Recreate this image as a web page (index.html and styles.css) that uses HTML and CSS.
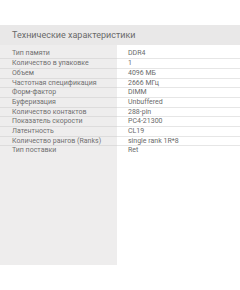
FILE: index.html
```html
<!DOCTYPE html>
<html lang="ru">
<head>
<meta charset="utf-8">
<link rel="stylesheet" href="styles.css">
</head>
<body>
<div class="page">
  <div class="title">Технические характеристики</div>
  <div class="specs">
    <div class="label">Тип памяти</div><div class="value">DDR4</div>
    <div class="label">Количество в упаковке</div><div class="value">1</div>
    <div class="label">Объем</div><div class="value">4096 МБ</div>
    <div class="label">Частотная спецификация</div><div class="value">2666 МГц</div>
    <div class="label">Форм-фактор</div><div class="value">DIMM</div>
    <div class="label">Буферизация</div><div class="value">Unbuffered</div>
    <div class="label">Количество контактов</div><div class="value">288-pin</div>
    <div class="label">Показатель скорости</div><div class="value">PC4-21300</div>
    <div class="label">Латентность</div><div class="value">CL19</div>
    <div class="label">Количество рангов (Ranks)</div><div class="value">single rank 1R*8</div>
    <div class="label">Тип поставки</div><div class="value">Ret</div>
  </div>
</div>
</body>
</html>
```
FILE: styles.css
```css
html, body {
  margin: 0;
  padding: 0;
  background: #ffffff;
}
.page {
  padding-top: 25px;
  font-family: Roboto, "Liberation Sans", sans-serif;
}
.title {
  height: 20px;
  line-height: 20px;
  background: #e9e8e8;
  color: #6a6a6a;
  font-size: 9px;
  padding-left: 12px;
}
.specs {
  display: grid;
  grid-template-columns: 117px 1fr;
  grid-auto-rows: 9.7px;
  align-content: start;
  padding-top: 3.5px;
  height: 216.5px;
  background: linear-gradient(to right, #eeeded 117px, #ffffff 117px);
}
.label, .value {
  font-size: 7px;
  line-height: 9.7px;
  box-sizing: border-box;
  white-space: nowrap;
}
.label {
  color: #707070;
  padding-left: 12px;
}
.value {
  color: #6a6a6a;
  padding-left: 11px;
}
.label:nth-child(n+3) {
  border-top: 1px solid #dddcdc;
}
.value:nth-child(n+3) {
  border-top: 1px solid #e6e6e6;
}
```
